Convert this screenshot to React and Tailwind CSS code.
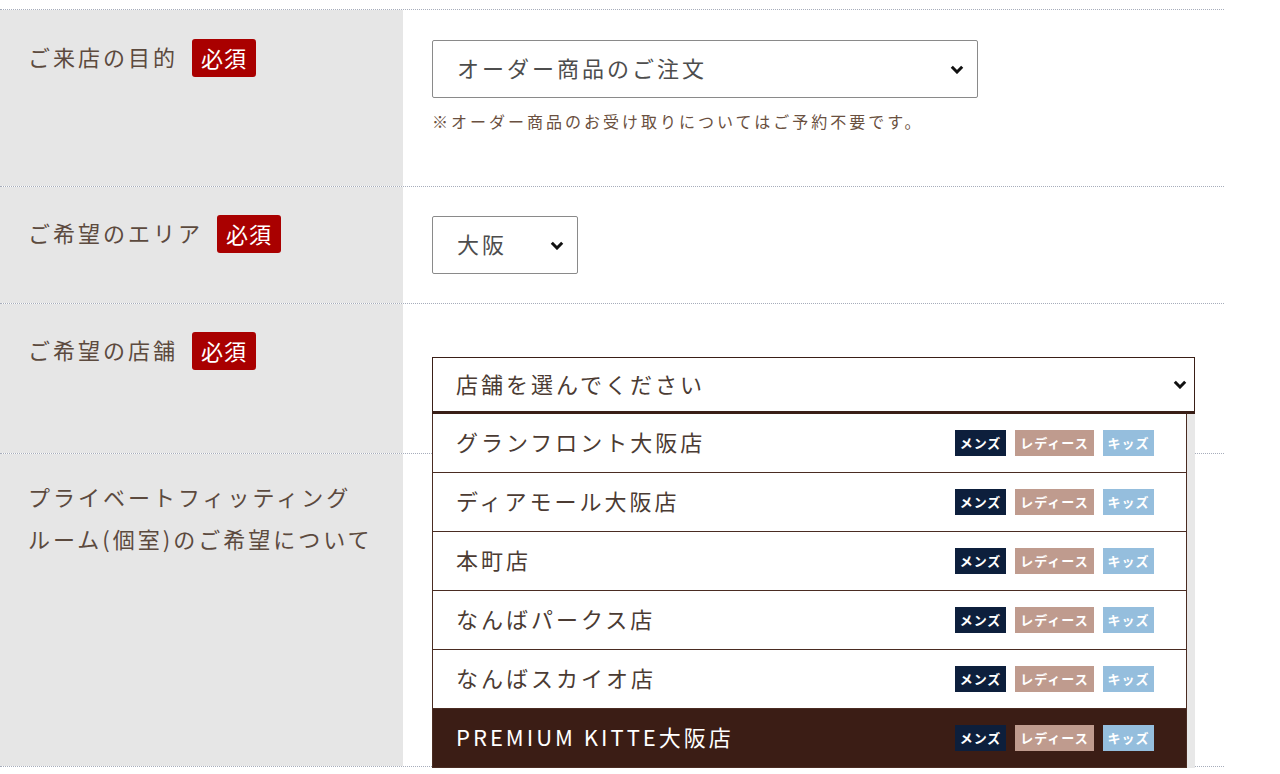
const stores = [
  { name: "グランフロント大阪店" },
  { name: "ディアモール大阪店" },
  { name: "本町店" },
  { name: "なんばパークス店" },
  { name: "なんばスカイオ店" },
  { name: "PREMIUM KITTE大阪店", active: true },
];

const Chevron = ({ className }) => (
  <svg viewBox="0 0 14 9" className={className} fill="none">
    <path d="M1.8 1.8 7 7l5.2-5.2" stroke="#111" strokeWidth="3" />
  </svg>
);

const Required = () => (
  <span className="inline-flex h-[38px] items-center rounded-[3px] bg-[#a90000] px-[9px] pb-[2px] text-[22px] tracking-[1px] text-white">
    必須
  </span>
);

const Label = ({ children, required, className = "" }) => (
  <div className={`bg-[#e6e6e6] pl-[28px] ${className}`}>
    <div className="flex items-center gap-[14px]">
      <span className="pb-[4px] text-[22px] leading-[34px] tracking-[3px] text-[#5c4a3e]">
        {children}
      </span>
      {required && <Required />}
    </div>
  </div>
);

const Tags = () => (
  <div className="flex gap-[9px] text-[13px] font-bold leading-[26px] tracking-[1px] text-white">
    <span className="h-[26px] w-[51px] bg-[#0d1f3c] text-center">メンズ</span>
    <span className="h-[26px] w-[79px] bg-[#bf9b8e] text-center">レディース</span>
    <span className="h-[26px] w-[51px] bg-[#95bedd] text-center">キッズ</span>
  </div>
);

const StoreList = () => (
  <div className="absolute left-0 top-[57px] z-10 flex w-[763px]">
    <ul className="w-[755px] border-x border-[#4a2c22] bg-white">
      {stores.map((s) => (
        <li
          key={s.name}
          className={`flex h-[59px] items-center justify-between border-b border-[#4a2c22] pl-[23px] pr-[32px] ${
            s.active ? "bg-[#3b1d15] text-white" : "text-[#4b3b33]"
          }`}
        >
          <span className="pb-[4px] text-[22px] tracking-[3px]">{s.name}</span>
          <Tags />
        </li>
      ))}
    </ul>
    <div className="w-[8px] bg-[#e8e8e8]" />
  </div>
);

export default function App() {
  return (
    <div className="h-[774px] w-[1280px] overflow-hidden bg-white pt-[9px] font-['Noto_Sans_CJK_JP',sans-serif]">
      <div className="w-[1224px] border-t border-dotted border-[#a7adbb]">
        {/* 来店目的 */}
        <div className="grid h-[177px] grid-cols-[403px_1fr] border-b border-dotted border-[#a7adbb]">
          <Label required className="pt-[29px]">
            ご来店の目的
          </Label>
          <div className="pl-[29px] pt-[30px]">
            <div className="flex h-[58px] w-[546px] items-center justify-between rounded-[2px] border border-[#8a8a8a] pl-[24px] pr-[13px]">
              <span className="pb-[4px] text-[22px] tracking-[3px] text-[#4d4d4d]">
                オーダー商品のご注文
              </span>
              <Chevron className="h-[9px] w-[14px]" />
            </div>
            <p className="mt-[11px] text-[16px] leading-[24px] tracking-[3px] text-[#6a5040]">
              ※オーダー商品のお受け取りについてはご予約不要です。
            </p>
          </div>
        </div>

        {/* エリア */}
        <div className="grid h-[117px] grid-cols-[403px_1fr] border-b border-dotted border-[#a7adbb]">
          <Label required className="pt-[28px]">
            ご希望のエリア
          </Label>
          <div className="pl-[29px] pt-[29px]">
            <div className="flex h-[58px] w-[146px] items-center justify-between rounded-[2px] border border-[#8a8a8a] pl-[24px] pr-[13px]">
              <span className="pb-[4px] text-[22px] tracking-[3px] text-[#4d4d4d]">大阪</span>
              <Chevron className="h-[9px] w-[14px]" />
            </div>
          </div>
        </div>

        {/* 店舗 */}
        <div className="grid h-[150px] grid-cols-[403px_1fr] border-b border-dotted border-[#a7adbb]">
          <Label required className="pt-[28px]">
            ご希望の店舗
          </Label>
          <div className="pl-[29px] pt-[53px]">
            <div className="relative w-[763px]">
              <div className="flex h-[57px] items-center justify-between border border-b-[3px] border-[#3a1f17] pl-[23px] pr-[7px]">
                <span className="pb-[3px] text-[22px] tracking-[3px] text-[#4b3b33]">
                  店舗を選んでください
                </span>
                <Chevron className="h-[9px] w-[14px]" />
              </div>
              <StoreList />
            </div>
          </div>
        </div>

        {/* 個室 */}
        <div className="grid h-[313px] grid-cols-[403px_1fr] border-b border-dotted border-[#a7adbb]">
          <div className="bg-[#e6e6e6] pl-[28px] pt-[21px]">
            <p className="text-[22px] leading-[42px] tracking-[3px] text-[#5c4a3e]">
              プライベートフィッティング
              <br />
              ルーム(個室)のご希望について
            </p>
          </div>
          <div />
        </div>
      </div>
    </div>
  );
}
